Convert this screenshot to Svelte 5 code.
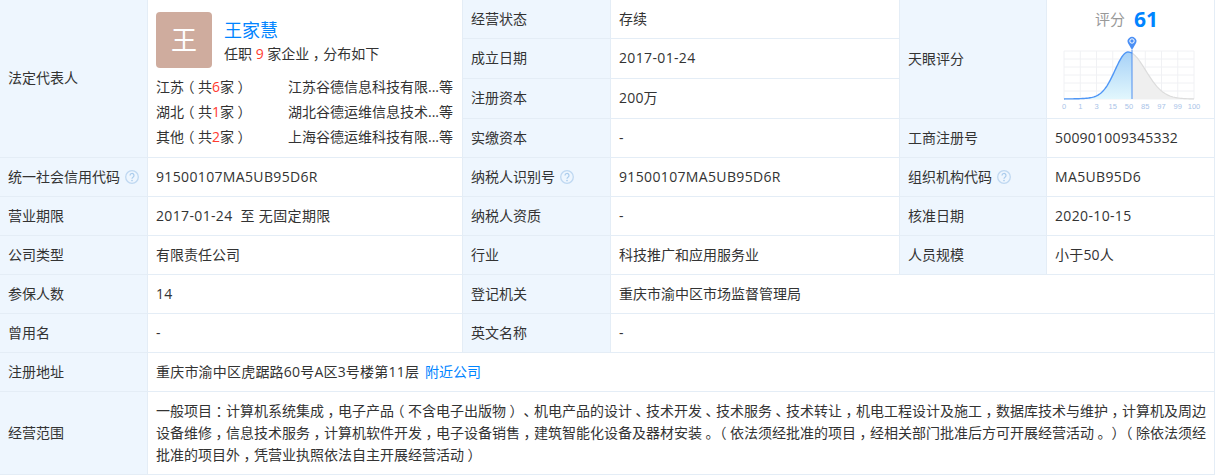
<script>
  const W = 130, H = 48, cx = 64;
  const y = (x) => {
    const s = x < cx ? 12.8 : 17.5;
    const d = x - cx;
    const main = Math.exp(-(d * d) / (2 * s * s));
    const tail = 0.05 * Math.exp(-(d * d) / (2 * 24 * 24));
    return H - (H - 1) * Math.min(1, main * 0.95 + tail);
  };
  const points = (a, b) => {
    const out = [];
    for (let x = a; x <= b; x += 1) out.push(`${x},${y(x).toFixed(2)}`);
    return out;
  };
  const split = 68;
  const leftCurve = points(0, split).join(' ');
  const rightCurve = points(split, W).join(' ');
  const leftArea = `0,${H} ${leftCurve} ${split},${H}`;
  const rightArea = `${split},${H} ${rightCurve} ${W},${H}`;
  const vLines = Array.from({ length: 9 }, (_, i) => (i * W) / 8);
  const hLines = Array.from({ length: 7 }, (_, i) => (i * H) / 6);
  const ticks = ['0', '1', '3', '15', '50', '85', '97', '99', '100'];
  const regions = [
    ['江苏', '6', '江苏谷德信息科技有限...'],
    ['湖北', '1', '湖北谷德运维信息技术...'],
    ['其他', '2', '上海谷德运维科技有限...']
  ];
  const scopeLines = [
    '一般项目：计算机系统集成，电子产品（不含电子出版物）、机电产品的设计、技术开发、技术服务、技术转让，机电工程设计及施工，数据库技术与维护，计算机及周边',
    '设备维修，信息技术服务，计算机软件开发，电子设备销售，建筑智能化设备及器材安装。（依法须经批准的项目，经相关部门批准后方可开展经营活动。）（除依法须经',
    '批准的项目外，凭营业执照依法自主开展经营活动）'
  ];
  const tokens = (s) => s.split(/([（），：。、])/).filter(Boolean);
  const isPunct = (t) => /^[（），：。、]$/.test(t);
</script>

{#snippet cjk(s)}
  {#each tokens(s) as t}{#if isPunct(t)}<span class="punct">{t}</span>{:else}{t}{/if}{/each}
{/snippet}

{#snippet help()}
  <svg class="help" width="14" height="14" viewBox="0 0 14 14" aria-hidden="true">
    <circle cx="7" cy="7" r="6.3" fill="none" stroke="#bfd8f1" stroke-width="1.3" />
    <path d="M5 5.5a2 2 0 1 1 3 1.7c-.7.4-1 .8-1 1.6" fill="none" stroke="#a9cbec" stroke-width="1.2" />
    <circle cx="7" cy="10.6" r=".8" fill="#a9cbec" />
  </svg>
{/snippet}

<table>
  <colgroup>
    <col class="c1" /><col class="c2" /><col class="c3" /><col class="c4" /><col class="c5" /><col class="c6" />
  </colgroup>
  <tbody>
    <tr class="r39">
      <th rowspan="4" class="lift">法定代表人</th>
      <td rowspan="4" class="legal">
        <div class="person">
          <div class="avatar">王</div>
          <div class="who">
            <a class="name" href="#top">王家慧</a>
            <div class="jobs">任职 <em>9</em> 家企业{@render cjk('，')}分布如下</div>
          </div>
        </div>
        <ul class="regions">
          {#each regions as [area, n, company]}
            <li>
              <span>{area}{@render cjk('（')}共<em>{n}</em>家{@render cjk('）')}</span>
              <span class="company">{company}等</span>
            </li>
          {/each}
        </ul>
      </td>
      <th>经营状态</th>
      <td>存续</td>
      <th rowspan="3">天眼评分</th>
      <td rowspan="3" class="score">
        <div class="score-head"><span>评分</span><b>61</b></div>
        <svg class="chart" width="150" height="78" viewBox="-9 -15 150 78">
          <defs>
            <linearGradient id="blueFill" x1="0" y1="0" x2="0" y2="1">
              <stop offset="0" stop-color="#a6d1f7" />
              <stop offset="1" stop-color="#e2f7fd" />
            </linearGradient>
          </defs>
          {#each vLines as x}
            <line x1={x} x2={x} y1="0" y2={H} stroke="#f0f1f4" />
          {/each}
          {#each hLines as l}
            <line x1="0" x2={W} y1={l} y2={l} stroke="#f0f1f4" />
          {/each}
          <polygon points={rightArea} fill="#efefef" />
          <polyline points={rightCurve} fill="none" stroke="#dcdcdc" stroke-width="1.2" />
          <polygon points={leftArea} fill="url(#blueFill)" />
          <polyline points={leftCurve} fill="none" stroke="#4f96f6" stroke-width="1.4" />
          <line x1={split} x2={split} y1="-1" y2={H} stroke="#4f8ff0" />
          <path d="M68 -1 L64.2 -7.5 A4.4 4.4 0 1 1 71.8 -7.5 Z" fill="#4a8ff5" />
          <circle cx="68" cy="-10" r="2.2" fill="none" stroke="#fff" stroke-width="1" />
          {#each ticks as t, i}
            <text x={(i * W) / 8} y="58" text-anchor="middle">{t}</text>
          {/each}
        </svg>
      </td>
    </tr>
    <tr class="r40"><th class="lift">成立日期</th><td class="wide lift">2017-01-24</td></tr>
    <tr class="r40"><th class="lift">注册资本</th><td class="code lift">200万</td></tr>
    <tr class="r39"><th>实缴资本</th><td>-</td><th>工商注册号</th><td class="code">500901009345332</td></tr>
    <tr class="r39">
      <th>统一社会信用代码{@render help()}</th><td class="wide">91500107MA5UB95D6R</td>
      <th>纳税人识别号{@render help()}</th><td class="wide">91500107MA5UB95D6R</td>
      <th>组织机构代码{@render help()}</th><td class="wide">MA5UB95D6</td>
    </tr>
    <tr class="r39">
      <th>营业期限</th><td class="wide">2017-01-24&nbsp; 至 无固定期限</td>
      <th>纳税人资质</th><td>-</td>
      <th>核准日期</th><td class="wide">2020-10-15</td>
    </tr>
    <tr class="r39">
      <th>公司类型</th><td>有限责任公司</td>
      <th>行业</th><td>科技推广和应用服务业</td>
      <th>人员规模</th><td class="code">小于50人</td>
    </tr>
    <tr class="r39">
      <th>参保人数</th><td class="code">14</td>
      <th>登记机关</th><td colspan="3">重庆市渝中区市场监督管理局</td>
    </tr>
    <tr class="r39">
      <th>曾用名</th><td>-</td>
      <th>英文名称</th><td colspan="3">-</td>
    </tr>
    <tr class="r39">
      <th>注册地址</th>
      <td colspan="5" class="code">重庆市渝中区虎踞路60号A区3号楼第11层<a class="near" href="#top">附近公司</a></td>
    </tr>
    <tr class="r83">
      <th>经营范围</th>
      <td colspan="5" class="scope">
        {#each scopeLines as line}
          <div class="scope-line">{@render cjk(line)}</div>
        {/each}
      </td>
    </tr>
  </tbody>
</table>

<style>
  :global(body) {
    margin: 0;
    background: #fff;
    overflow: hidden;
  }
  table {
    width: 1215px;
    margin: -1px 0 0 -1px;
    table-layout: fixed;
    border-collapse: collapse;
    font-family: "Open Sans", "Noto Sans CJK SC", sans-serif;
    font-size: 14px;
    color: #333;
    text-spacing-trim: space-all;
  }
  .c1 { width: 148px; }
  .c2 { width: 315px; }
  .c3 { width: 148px; }
  .c4 { width: 289px; }
  .c5 { width: 147px; }
  .c6 { width: 168px; }
  .r39 { height: 39px; }
  .r40 { height: 40px; }
  .r83 { height: 83px; }
  th, td {
    padding: 0 8px;
    border: 1px solid #e4edf6;
    font-weight: 400;
    text-align: left;
    line-height: 20px;
    vertical-align: middle;
    box-sizing: border-box;
  }
  th {
    background: #eef6fe;
    white-space: nowrap;
  }
  .lift {
    padding-bottom: 2px;
  }
  .code {
    letter-spacing: 0.2px;
  }
  .wide {
    letter-spacing: 0.35px;
  }
  .help {
    margin-left: 5px;
    vertical-align: -2px;
  }
  em {
    font-style: normal;
    color: #ff3b30;
  }
  a {
    color: #0084ff;
    text-decoration: none;
  }
  .punct {
    font-feature-settings: "halt";
    padding: 0 3.5px;
  }
  .legal {
    vertical-align: top;
    padding: 12px 8px 0;
  }
  .person {
    display: flex;
    gap: 12px;
  }
  .avatar {
    width: 56px;
    height: 56px;
    flex: none;
    border-radius: 4px;
    background: #cfac9e;
    color: #fff;
    font-size: 26px;
    line-height: 56px;
    text-align: center;
  }
  .who {
    padding-top: 6px;
  }
  .name {
    display: block;
    font-size: 18px;
    line-height: 24px;
  }
  .jobs {
    margin-top: 2px;
    line-height: 20px;
  }
  .regions {
    list-style: none;
    margin: 6px 0 0;
    padding: 0;
  }
  .regions li {
    display: flex;
    line-height: 25px;
  }
  .regions li span:first-child {
    width: 132px;
    flex: none;
  }
  .company {
    white-space: nowrap;
  }
  .score {
    padding: 0;
    vertical-align: top;
  }
  .score-head {
    display: flex;
    justify-content: center;
    align-items: center;
    gap: 9px;
    height: 36px;
    padding-top: 2px;
    box-sizing: border-box;
    color: #999;
    font-size: 15px;
    margin-right: 8px;
  }
  .score-head b {
    font-size: 21px;
    font-weight: 700;
    color: #0084ff;
  }
  .chart {
    display: block;
    margin: 0 0 0 8px;
    overflow: visible;
  }
  .chart text {
    font-size: 7.5px;
    fill: #a9c3e8;
    font-family: "Liberation Sans", sans-serif;
  }
  .near {
    margin-left: 6px;
    letter-spacing: 0;
  }
  .scope {
    line-height: 22px;
  }
  .scope-line {
    white-space: nowrap;
  }
</style>
